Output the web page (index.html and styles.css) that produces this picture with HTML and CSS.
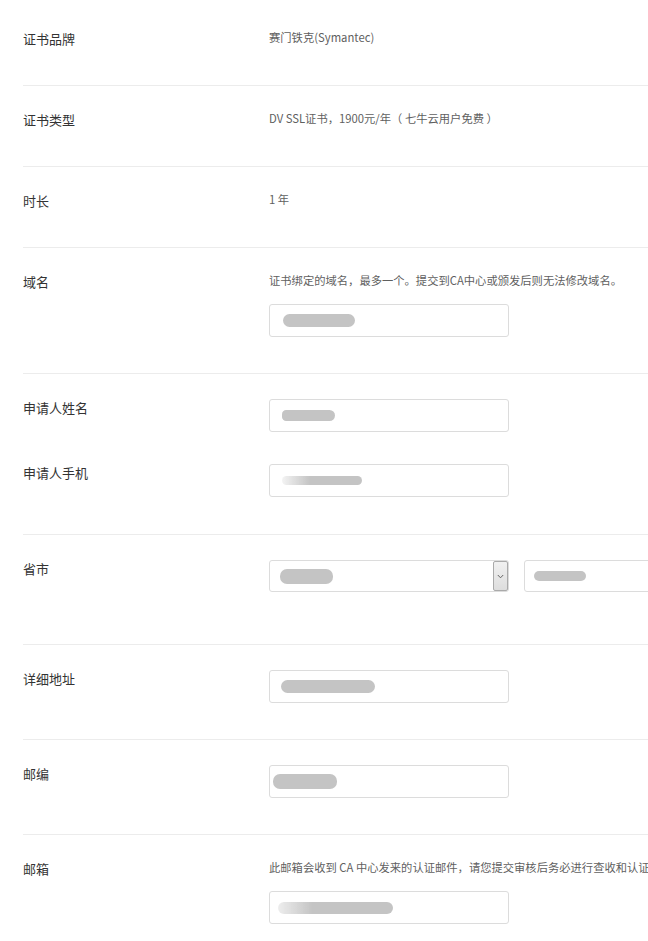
FILE: index.html
```html
<!DOCTYPE html>
<html lang="zh-CN">
<head>
<meta charset="utf-8">
<title>申请证书</title>
<link rel="stylesheet" href="styles.css">
</head>
<body>
<div class="form">
  <div class="row">
    <div class="pair">
      <div class="label">证书品牌</div>
      <div class="value"><p class="text">赛门铁克(Symantec)</p></div>
    </div>
  </div>
  <div class="row">
    <div class="pair">
      <div class="label">证书类型</div>
      <div class="value"><p class="text">DV SSL证书，1900元/年（ 七牛云用户免费 ）</p></div>
    </div>
  </div>
  <div class="row">
    <div class="pair">
      <div class="label">时长</div>
      <div class="value"><p class="text">1 年</p></div>
    </div>
  </div>
  <div class="row row-compact">
    <div class="pair">
      <div class="label">域名</div>
      <div class="value">
        <p class="text hint">证书绑定的域名，最多一个。提交到CA中心或颁发后则无法修改域名。</p>
        <div class="input"><span class="blob b-domain"></span></div>
      </div>
    </div>
  </div>
  <div class="row">
    <div class="pair">
      <div class="label">申请人姓名</div>
      <div class="value"><div class="input"><span class="blob b-name"></span></div></div>
    </div>
    <div class="pair">
      <div class="label">申请人手机</div>
      <div class="value"><div class="input"><span class="blob b-phone"></span></div></div>
    </div>
  </div>
  <div class="row row-tall">
    <div class="pair">
      <div class="label">省市</div>
      <div class="value selects">
        <div class="select">
          <span class="blob b-prov"></span>
          <span class="caret"><svg width="7" height="5" viewBox="0 0 7 5"><path d="M0.8 1 L3.5 3.8 L6.2 1" fill="none" stroke="#666" stroke-width="1"/></svg></span>
        </div>
        <div class="select">
          <span class="blob b-city"></span>
          <span class="caret"><svg width="7" height="5" viewBox="0 0 7 5"><path d="M0.8 1 L3.5 3.8 L6.2 1" fill="none" stroke="#666" stroke-width="1"/></svg></span>
        </div>
      </div>
    </div>
  </div>
  <div class="row row-compact">
    <div class="pair">
      <div class="label">详细地址</div>
      <div class="value"><div class="input"><span class="blob b-addr"></span></div></div>
    </div>
  </div>
  <div class="row row-compact">
    <div class="pair">
      <div class="label">邮编</div>
      <div class="value"><div class="input"><span class="blob b-zip"></span></div></div>
    </div>
  </div>
  <div class="row">
    <div class="pair">
      <div class="label">邮箱</div>
      <div class="value">
        <p class="text hint hint-email">此邮箱会收到 CA 中心发来的认证邮件，请您提交审核后务必进行查收和认证。</p>
        <div class="input"><span class="blob b-mail"></span></div>
      </div>
    </div>
  </div>
</div>
</body>
</html>
```

FILE: styles.css
```css
html, body {
  margin: 0;
  padding: 0;
  overflow: hidden;
  background: #fff;
}

body {
  font-family: "Noto Sans CJK SC", "Microsoft YaHei", "Noto Sans", sans-serif;
  color: #333;
}

.form {
  padding: 5px 0 0 23px;
}

.row {
  display: flex;
  flex-direction: column;
  gap: 32px;
  padding: 25px 0 37px;
  border-bottom: 1px solid #ececec;
}

.row-compact {
  padding-bottom: 36px;
}

.row-tall {
  padding-bottom: 52px;
}

.pair {
  display: flex;
  align-items: flex-start;
}

.label {
  flex: 0 0 246px;
  font-size: 13px;
  line-height: 18px;
  color: #333;
}

.value {
  flex: 1 0 auto;
  display: flex;
  flex-direction: column;
  align-items: flex-start;
}

.text {
  margin: 0;
  font-size: 11.3px;
  line-height: 14px;
  color: #5f5f5f;
  white-space: nowrap;
}

.hint {
  margin-bottom: 17px;
}

.input,
.select {
  box-sizing: border-box;
  width: 240px;
  height: 33px;
  border: 1px solid #dcdcdc;
  border-radius: 3px;
  background: #fff;
  display: flex;
  align-items: center;
  flex-shrink: 0;
}

.selects {
  flex-direction: row;
  gap: 15px;
  flex-wrap: nowrap;
}

.select {
  height: 32px;
  justify-content: space-between;
}

.caret {
  box-sizing: border-box;
  width: 15px;
  height: 30px;
  border: 1px solid #aaa;
  border-radius: 2px;
  background: linear-gradient(#f1f1f1, #dddddd);
  display: flex;
  align-items: center;
  justify-content: center;
}

.blob {
  display: block;
  background: #c4c4c4;
  border-radius: 7px;
  filter: blur(0.7px);
}

.b-domain { margin-left: 13px; width: 72px; height: 13px; }
.b-name   { margin-left: 12px; width: 53px; height: 11px; border-radius: 6px 8px 8px 6px; }
.b-phone  { margin-left: 12px; width: 80px; height: 9px; background: linear-gradient(90deg, rgba(196,196,196,0.2), #c4c4c4 35%); }
.b-prov   { margin-left: 10px; width: 53px; height: 15px; }
.b-city   { margin-left: 9px;  width: 52px; height: 10px; }
.b-addr   { margin-left: 11px; width: 94px; height: 13px; }
.b-zip    { margin-left: 3px;  width: 64px; height: 15px; }
.b-mail   { margin-left: 8px;  width: 115px; height: 12px; background: linear-gradient(90deg, rgba(196,196,196,0.3), #c4c4c4 30%); }
```
